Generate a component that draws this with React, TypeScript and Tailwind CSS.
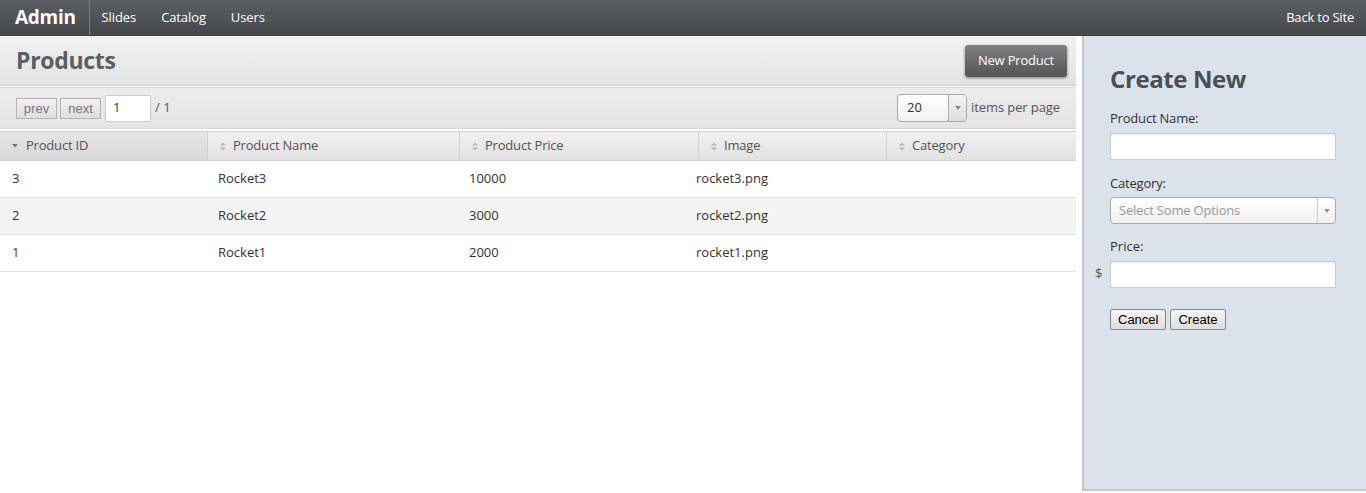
import React from "react";

const SortIcon = () => (
  <svg width="6" height="9" viewBox="0 0 6 9" className="mr-[7px] shrink-0">
    <path d="M0 3.5 L3 0.5 L6 3.5 Z" fill="#b5b5b5" />
    <path d="M0 5.5 L3 8.5 L6 5.5 Z" fill="#b5b5b5" />
  </svg>
);
const SortDown = () => (
  <svg width="6" height="4" viewBox="0 0 6 4" className="mr-[8px] shrink-0">
    <path d="M0 0 L3 3.5 L6 0 Z" fill="#777" />
  </svg>
);

const rows = [
  { id: "3", name: "Rocket3", price: "10000", img: "rocket3.png", visited: false },
  { id: "2", name: "Rocket2", price: "3000", img: "rocket2.png", visited: false },
  { id: "1", name: "Rocket1", price: "2000", img: "rocket1.png", visited: true },
];

const cols = [
  { label: "Product ID", w: "w-[207px]", sorted: true },
  { label: "Product Name", w: "w-[252px]" },
  { label: "Product Price", w: "w-[239px]" },
  { label: "Image", w: "w-[188px]" },
  { label: "Category", w: "flex-1" },
];

export default function App() {
  return (
    <div className="w-[1366px] h-[493px] overflow-hidden bg-white text-[13px] text-[#333]" style={{ fontFamily: '"Open Sans", "Noto Sans", sans-serif' }}>
      {/* top nav */}
      <div className="h-[36px] flex items-center bg-gradient-to-b from-[#5a5f63] to-[#45494c] border-b border-[#3a3d40] text-white">
        <div className="h-full flex items-center pl-[15px] pr-[13px] border-r border-[#7a7e82] text-[19px] font-bold tracking-[-0.3px]">Admin</div>
        <div className="flex items-center gap-[25px] pl-[12px] text-[13px] tracking-[-0.1px]">
          <span>Slides</span>
          <span>Catalog</span>
          <span>Users</span>
        </div>
        <div className="ml-auto pr-[12px] text-[13px] tracking-[-0.2px]">Back to Site</div>
      </div>

      <div className="flex h-[457px]">
        {/* main */}
        <div className="w-[1076px] flex flex-col">
          <div className="h-[50px] flex items-center justify-between px-[16px] pr-[9px] bg-gradient-to-b from-[#f1f1f1] to-[#e2e3e3] border-b border-[#cfcfcf]">
            <div className="text-[23px] font-bold text-[#5a5f66] tracking-[-0.3px]">Products</div>
            <button className="h-[32px] px-[13px] rounded-[3px] bg-gradient-to-b from-[#808080] to-[#555] text-white text-[13px] tracking-[-0.2px] shadow-[0_1px_3px_rgba(0,0,0,0.45)]">New Product</button>
          </div>
          <div className="mt-[1px] h-[42px] flex items-center px-[16px] pr-[16px] bg-gradient-to-b from-[#ececec] to-[#e4e4e4] border-t border-[#d8d8d8] border-b border-[#cfcfcf]">
            <button className="h-[21px] w-[41px] border border-[#b3b3b3] bg-gradient-to-b from-[#f1f1f1] to-[#dedede] text-[#777] text-[13px] leading-none" style={{ fontFamily: '"Liberation Sans", Arial, sans-serif' }}>prev</button>
            <button className="ml-[3px] h-[21px] w-[41px] border border-[#b3b3b3] bg-gradient-to-b from-[#f1f1f1] to-[#dedede] text-[#777] text-[13px] leading-none" style={{ fontFamily: '"Liberation Sans", Arial, sans-serif' }}>next</button>
            <div className="ml-[4px] h-[27px] w-[46px] bg-white border border-[#ccc] rounded-[2px] flex items-center px-[7px] text-[13px]">1</div>
            <span className="ml-[4px] text-[#555]">/ 1</span>
            <div className="ml-auto flex items-center">
              <div className="h-[28px] w-[70px] bg-gradient-to-b from-white to-[#f1f1f1] border border-[#aaa] rounded-[4px] flex items-center">
                <span className="flex-1 pl-[9px] text-[13px] text-[#333]">20</span>
                <span className="h-full w-[18px] border-l border-[#aaa] bg-gradient-to-b from-[#f4f4f4] to-[#ddd] rounded-r-[4px] flex items-center justify-center">
                  <svg width="6" height="4" viewBox="0 0 6 4"><path d="M0 0 L3 4 L6 0Z" fill="#888" /></svg>
                </span>
              </div>
              <span className="ml-[4px] text-[#555] tracking-[-0.1px]">items per page</span>
            </div>
          </div>
          <div className="mt-[2px] h-[30px] flex bg-gradient-to-b from-[#f1f1f1] to-[#e1e1e1] border-t border-[#d3d3d3] border-b border-[#cdcdcd] text-[#555] tracking-[-0.2px]">
            {cols.map((c, i) => (
              <div key={i} className={`${c.w} flex items-center px-[12px] ${i > 0 ? "border-l border-[#d2d2d2]" : ""} ${c.sorted ? "bg-gradient-to-b from-[#e6e6e6] to-[#d8d8d8]" : ""}`}>
                {c.sorted ? <SortDown /> : <SortIcon />}
                <span>{c.label}</span>
              </div>
            ))}
          </div>
          {rows.map((r, i) => (
            <div key={i} className={`h-[37px] flex items-center border-b border-[#e2e2e2] ${i === 1 ? "bg-[#f3f4f4]" : "bg-white"}`}>
              <div className={`w-[207px] pl-[12px] ${r.visited ? "text-[#551a8b]" : ""}`}>{r.id}</div>
              <div className="w-[252px] pl-[11px]">{r.name}</div>
              <div className="w-[237px] pl-[10px]">{r.price}</div>
              <div className="w-[190px]">{r.img}</div>
              <div className="flex-1"></div>
            </div>
          ))}
        </div>

        {/* right panel */}
        <div className="ml-[6px] w-[284px] h-[455px] bg-[#dae3ec] border-l-2 border-b-2 border-[#c4c7ca] pl-[26px] pr-[28px]">
          <div className="mt-[28px] text-[24px] font-bold text-[#4a4f55] tracking-[-0.4px] leading-[30px]">Create New</div>
          <div className="mt-[15px] text-[#333] tracking-[-0.2px]">Product Name:</div>
          <div className="mt-[4px] h-[27px] w-[226px] bg-white border border-[#ccc] shadow-[inset_0_1px_2px_rgba(0,0,0,0.08)]"></div>
          <div className="mt-[14px] text-[#333] tracking-[-0.2px]">Category:</div>
          <div className="mt-[4px] h-[27px] w-[226px] bg-gradient-to-b from-white to-[#f0f0f0] border border-[#aaa] rounded-[4px] flex items-center">
            <span className="flex-1 pl-[8px] text-[#999] tracking-[-0.2px]">Select Some Options</span>
            <span className="h-full w-[18px] border-l border-[#ccc] flex items-center justify-center">
              <svg width="6" height="4" viewBox="0 0 6 4"><path d="M0 0 L3 4 L6 0Z" fill="#999" /></svg>
            </span>
          </div>
          <div className="mt-[13px] text-[#333]">Price:</div>
          <div className="mt-[4px] flex items-center relative">
            <span className="absolute left-[-15px] text-[#555]">$</span>
            <div className="h-[27px] w-[226px] bg-white border border-[#ccc] shadow-[inset_0_1px_2px_rgba(0,0,0,0.08)]"></div>
          </div>
          <div className="mt-[21px] flex gap-[4px]" style={{ fontFamily: '"Liberation Sans", Arial, sans-serif' }}>
            <button className="h-[21px] px-[7px] border border-[#888] rounded-[2px] bg-gradient-to-b from-[#f6f6f6] to-[#dcdcdc] text-[13px] text-black">Cancel</button>
            <button className="h-[21px] px-[7px] border border-[#888] rounded-[2px] bg-gradient-to-b from-[#f6f6f6] to-[#dcdcdc] text-[13px] text-black">Create</button>
          </div>
        </div>
      </div>
    </div>
  );
}
